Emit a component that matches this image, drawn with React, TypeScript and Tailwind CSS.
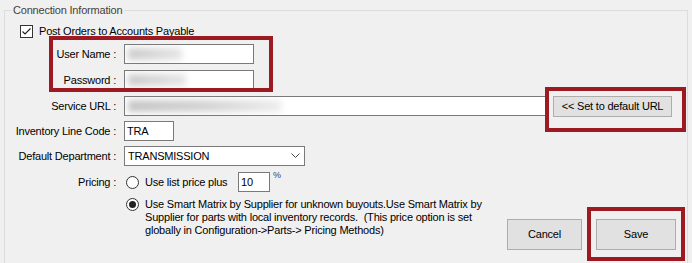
import React from "react";

function CheckBox() {
  return (
    <div className="w-[13px] h-[13px] border border-[#333333] bg-white flex items-center justify-center shrink-0">
      <svg width="11" height="11" viewBox="0 0 11 11">
        <polyline points="1.5,5.5 4,8 9.5,2.5" fill="none" stroke="#222" strokeWidth="1.2" />
      </svg>
    </div>
  );
}

function Radio({ checked }: { checked?: boolean }) {
  return (
    <div className="w-[13px] h-[13px] rounded-full border border-[#333333] bg-white flex items-center justify-center shrink-0">
      {checked && <div className="w-[7px] h-[7px] rounded-full bg-[#222222]" />}
    </div>
  );
}

function Blur({ w, strong }: { w: string; strong?: boolean }) {
  return (
    <div
      className={`h-[12px] ${w} blur-[3px] ${
        strong
          ? "bg-linear-to-r from-[#c6c6c6] via-[#d4d4d4] to-[#eeeeee]"
          : "bg-linear-to-r from-[#cccccc] to-[#e6e6e6]"
      }`}
    />
  );
}

function Label({ children }: { children: React.ReactNode }) {
  return <div className="w-[111px] text-right shrink-0 whitespace-pre">{children}</div>;
}

export default function App() {
  return (
    <div className="relative w-[692px] h-[263px] overflow-hidden bg-[#f0f0f0] text-[11px] leading-[13px] tracking-[-0.2px] text-black font-['Liberation_Sans',Arial,sans-serif]">
      {/* Group box */}
      <div className="relative ml-[4px] mt-[10px] w-[684px] h-[270px] border border-[#dcdcdc]">
        <span className="absolute -top-[7px] left-[6px] px-[2px] bg-[#f0f0f0] text-[#4a4036]">
          Connection Information
        </span>

        <div className="flex flex-col">
          {/* Post orders */}
          <div className="flex items-center mt-[14px] ml-[15px] gap-[6px]">
            <CheckBox />
            <span>Post Orders to Accounts Payable</span>
          </div>

          {/* User name */}
          <div className="flex items-center mt-[6px] gap-[8px]">
            <Label>User Name :</Label>
            <div className="h-[20px] w-[130px] border border-[#7a7a7a] bg-white flex items-center pl-[3px] overflow-hidden">
              <Blur w="w-[54px]" />
            </div>
          </div>

          {/* Password */}
          <div className="flex items-center mt-[6px] gap-[8px]">
            <Label>Password :</Label>
            <div className="h-[20px] w-[130px] border border-[#7a7a7a] bg-white flex items-center pl-[3px] overflow-hidden">
              <Blur w="w-[58px]" />
            </div>
          </div>

          {/* Service URL */}
          <div className="flex items-start mt-[6px] gap-[8px] h-[21px]">
            <Label>
              <div className="h-[20px] flex items-center justify-end">Service URL :</div>
            </Label>
            <div className="h-[20px] w-[424px] border border-[#7a7a7a] bg-white flex items-center pl-[3px] overflow-hidden">
              <Blur w="w-[154px]" strong />
            </div>
            <button className="ml-[-3px] h-[21px] w-[119px] border border-[#adadad] bg-[#e1e1e1] flex items-center justify-center">
              &lt;&lt; Set to default URL
            </button>
          </div>

          {/* Inventory line code */}
          <div className="flex items-center mt-[4px] gap-[8px]">
            <Label>Inventory Line Code :</Label>
            <div className="h-[20px] w-[50px] border border-[#7a7a7a] bg-white flex items-center pl-[2px]">
              TRA
            </div>
          </div>

          {/* Default department */}
          <div className="flex items-center mt-[5px] gap-[8px]">
            <Label>Default Department :</Label>
            <div className="h-[20px] w-[181px] border border-[#7a7a7a] bg-white flex items-center pl-[3px] pr-[4px]">
              <span className="flex-1">TRANSMISSION</span>
              <svg width="9" height="6" viewBox="0 0 9 6">
                <polyline points="0.5,0.5 4.5,4.5 8.5,0.5" fill="none" stroke="#444" strokeWidth="1" />
              </svg>
            </div>
          </div>

          {/* Pricing */}
          <div className="flex items-center mt-[6px] gap-[8px]">
            <Label>Pricing :</Label>
            <div className="flex items-center">
              <div className="ml-[2px]">
                <Radio />
              </div>
              <span className="ml-[6px] w-[93px]">Use list price plus</span>
              <div className="h-[20px] w-[32px] border border-[#7a7a7a] bg-white flex items-center pl-[2px]">
                10
              </div>
              <span className="self-start ml-[3px] -mt-[2px] text-[9px] leading-[10px] text-[#2a3f73]">%</span>
            </div>
          </div>

          {/* Smart matrix + buttons */}
          <div className="flex items-start mt-[6px]">
            <div className="ml-[121px]">
              <Radio checked />
            </div>
            <div className="ml-[6px] whitespace-pre">
              {"Use Smart Matrix by Supplier for unknown buyouts.Use Smart Matrix by\nSupplier for parts with local inventory records.  (This price option is set\nglobally in Configuration->Parts-> Pricing Methods)"}
            </div>
            <div className="ml-auto mr-[11px] mt-[21px] flex gap-[14px]">
              <button className="h-[31px] w-[75px] border border-[#adadad] bg-[#e1e1e1] flex items-center justify-center">
                Cancel
              </button>
              <button className="h-[31px] w-[80px] border border-[#adadad] bg-[#e1e1e1] flex items-center justify-center">
                Save
              </button>
            </div>
          </div>
        </div>
      </div>

      {/* Annotation overlays */}
      <div className="absolute left-[49px] top-[36px] w-[224px] h-[56px] border-4 border-[#9e1a22]" />
      <div className="absolute left-[545px] top-[87px] w-[141px] h-[45px] border-4 border-[#9e1a22]" />
      <div className="absolute left-[587px] top-[207px] w-[98px] h-[54px] border-4 border-[#9e1a22]" />
    </div>
  );
}
